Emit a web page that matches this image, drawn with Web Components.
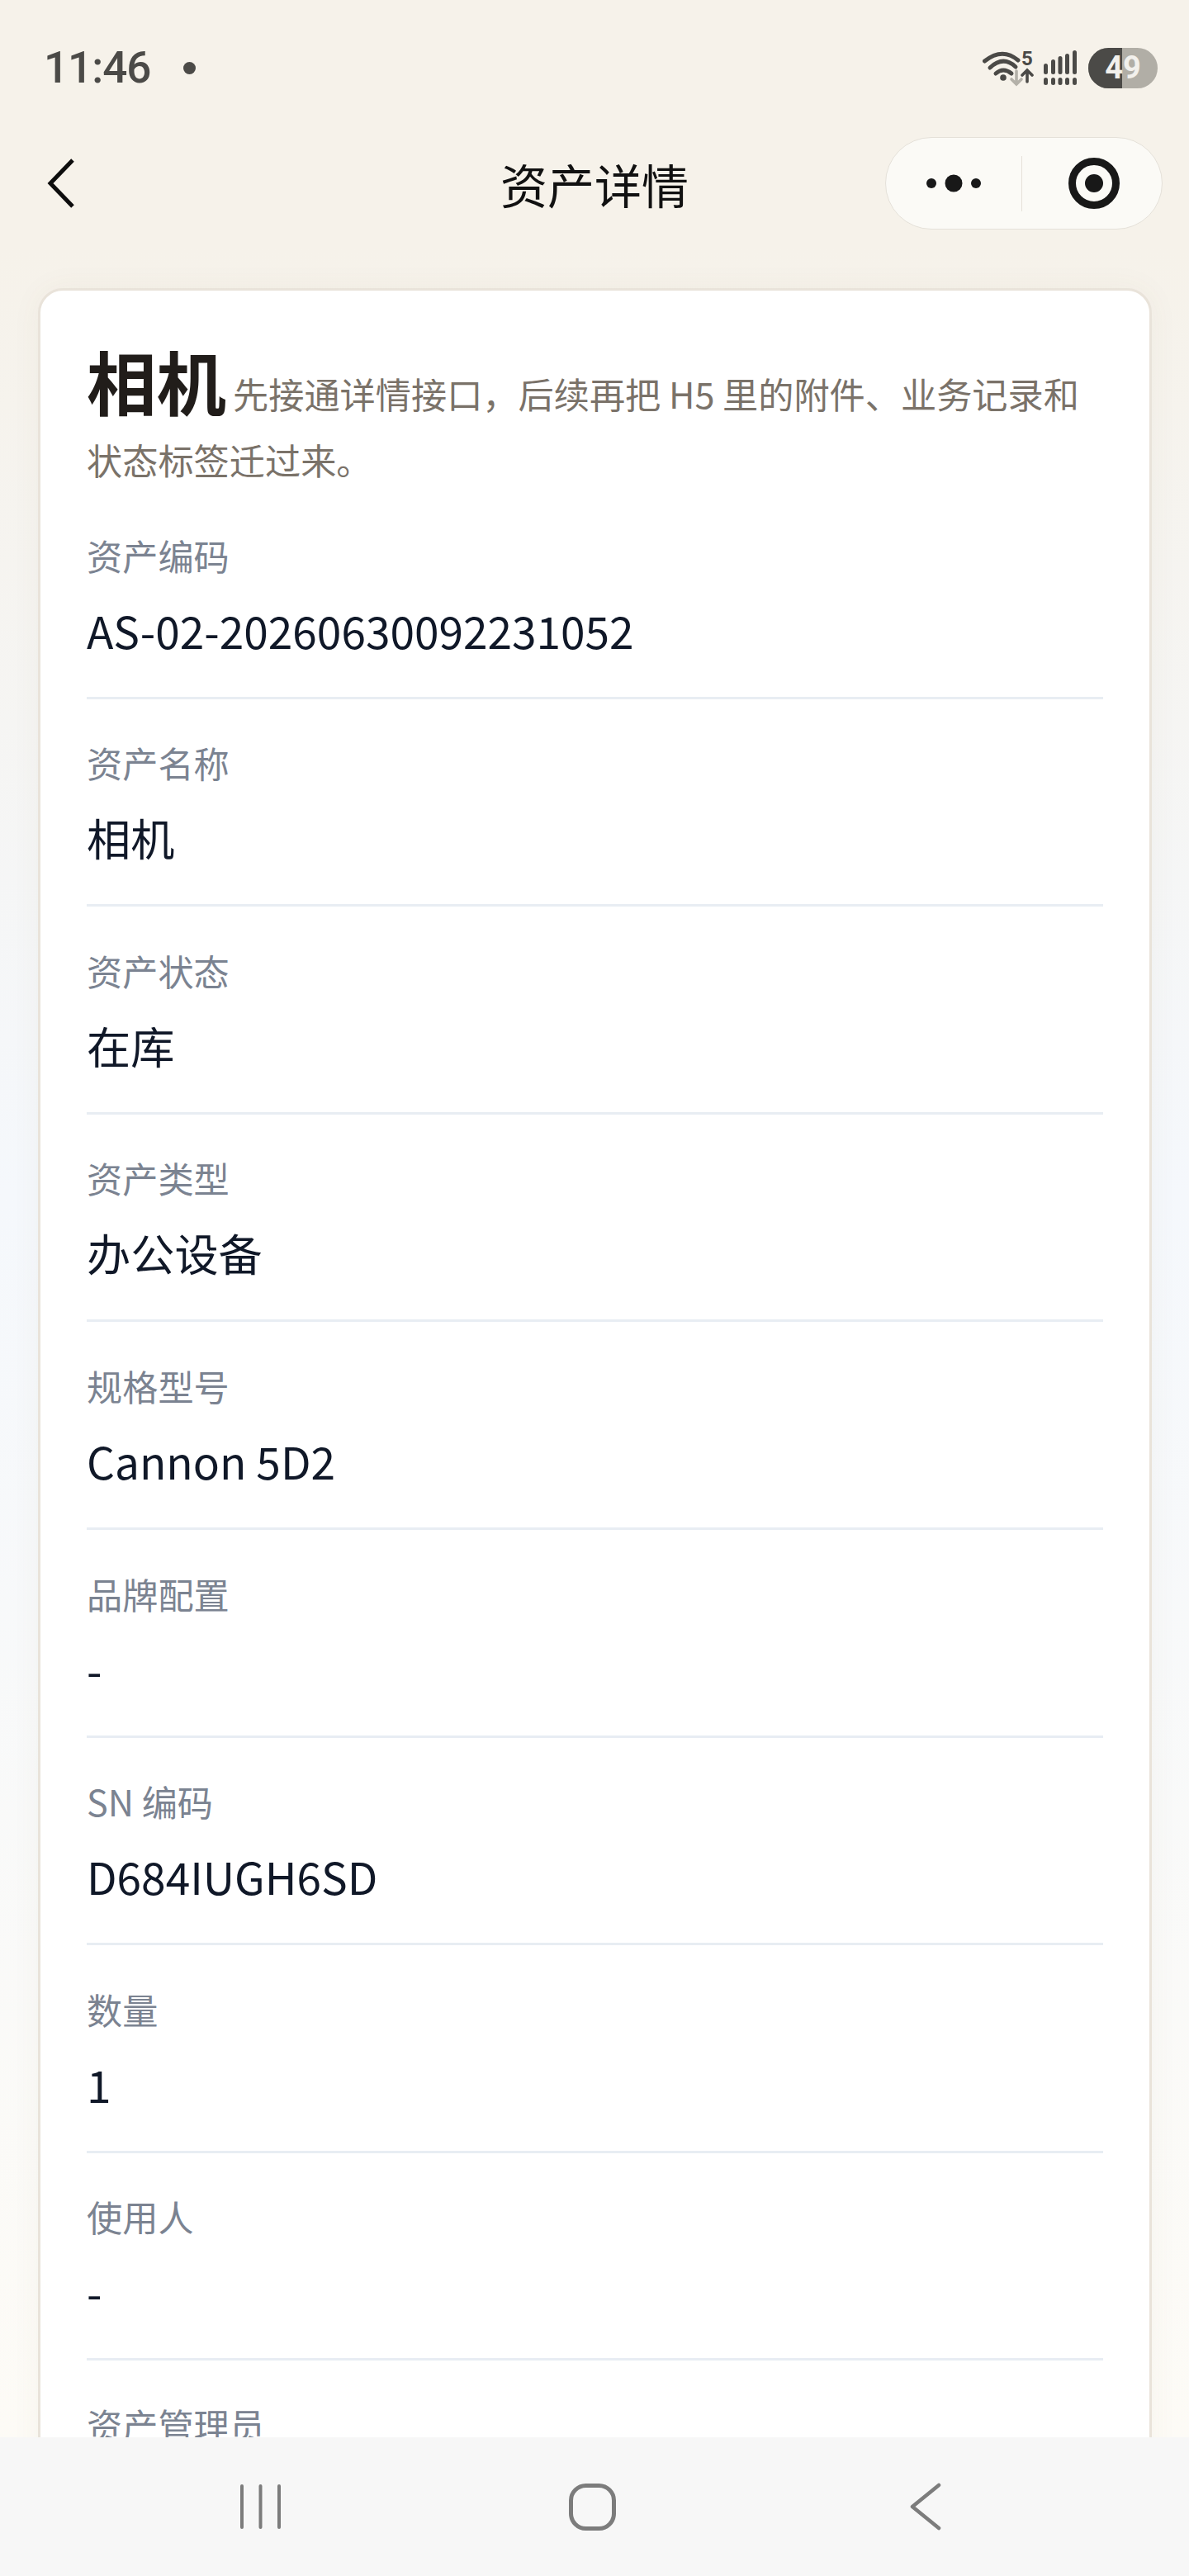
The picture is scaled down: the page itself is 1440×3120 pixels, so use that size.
<!DOCTYPE html>
<html>
<head>
<meta charset="utf-8">
<title>资产详情</title>
<style>
html,body{margin:0;padding:0;height:3120px;overflow:hidden}
body{font-family:"Noto Sans CJK SC","Noto Sans",sans-serif;background:#f6f2ea}
</style>
</head>
<body>
<app-page>
  <status-bar slot="top"></status-bar>
  <nav-bar slot="top">资产详情</nav-bar>
  <detail-card>
    <span slot="title">相机</span>
    <span slot="desc">先接通详情接口，后续再把 H5 里的附件、业务记录和状态标签迁过来。</span>
    <detail-row label="资产编码" value="AS-02-20260630092231052"></detail-row>
    <detail-row label="资产名称" value="相机"></detail-row>
    <detail-row label="资产状态" value="在库"></detail-row>
    <detail-row label="资产类型" value="办公设备"></detail-row>
    <detail-row label="规格型号" value="Cannon 5D2"></detail-row>
    <detail-row label="品牌配置" value="-"></detail-row>
    <detail-row label="SN 编码" value="D684IUGH6SD"></detail-row>
    <detail-row label="数量" value="1"></detail-row>
    <detail-row label="使用人" value="-"></detail-row>
    <detail-row label="资产管理员" value="-"></detail-row>
  </detail-card>
  <sys-nav slot="bottom"></sys-nav>
</app-page>
<script>
class AppPage extends HTMLElement {
  constructor(){ super()
    this.attachShadow({mode:'open'}).innerHTML = `
<style>
:host{display:flex;flex-direction:column;height:3120px;background:linear-gradient(180deg,#f6f2ea 0,#f6f2ea 300px,#f5f8fc 1450px,#fdfbf6 2950px)}
#main{flex:1;min-height:0;overflow:hidden;padding:55px 45px 0 46px}
</style>
<slot name="top"></slot>
<div id="main"><slot></slot></div>
<slot name="bottom"></slot>`
  }
}
class StatusBar extends HTMLElement {
  constructor(){ super()
    this.attachShadow({mode:'open'}).innerHTML = `
<style>
:host{display:flex;align-items:center;justify-content:space-between;height:150px;padding:14px 38px 0 53px;box-sizing:border-box;color:#4b4a47}
#l{display:flex;align-items:center;gap:40px;font:500 53px/1 Roboto,sans-serif;letter-spacing:-1px}
#dot{width:15px;height:15px;border-radius:50%;background:#4b4a47}
#r{display:flex;align-items:center}
svg{display:block}
#batt{position:relative;width:84px;height:49px;border-radius:25px;overflow:hidden;background:#b1aea6;margin-left:14px;display:flex;align-items:center;justify-content:center;font:700 38px/1 Roboto,sans-serif;color:#f2f0ec}
#batt i{position:absolute;left:0;top:0;bottom:0;width:41px;background:#4b4a47}
#batt span{position:relative}
</style>
<div id="l"><span>11:46</span><div id="dot"></div></div>
<div id="r">
  <svg width="62" height="63" viewBox="0 -10 62 63" fill="none" stroke="#4b4a47" stroke-linecap="round">
    <path d="M2.5 13 Q24 -4 43 12" stroke-width="5"/>
    <path d="M9 21 Q25 6 40 20" stroke-width="5"/>
    <path d="M16 28 Q25 20 35 28" stroke-width="5"/>
    <circle cx="25" cy="33" r="3.8" fill="#4b4a47" stroke="none"/>
    <path d="M41 25V41M35 35l6 6 6-6" stroke="#b4b1a9" stroke-width="3.6"/>
    <path d="M54 38V24M48 30l6-6 6 6" stroke-width="3.6"/>
    <text x="54" y="18" text-anchor="middle" font-family="Roboto,sans-serif" font-weight="700" font-size="24" fill="#4b4a47" stroke="none">5</text>
  </svg>
  <svg width="40" height="42" viewBox="0 0 40 42" fill="#4b4a47" style="margin-left:12px">
    <rect x="0" y="16" width="5" height="13" rx="2.5"/><rect x="9" y="11" width="5" height="18" rx="2.5"/><rect x="17.5" y="7" width="5" height="22" rx="2.5"/><rect x="26" y="4" width="5" height="25" rx="2.5"/><rect x="35" y="0" width="5" height="29" rx="2.5"/>
    <rect x="0" y="33" width="5" height="9" rx="2.5"/><rect x="9" y="33" width="5" height="9" rx="2.5"/><rect x="17.5" y="33" width="5" height="9" rx="2.5"/><rect x="26" y="33" width="5" height="9" rx="2.5"/><rect x="35" y="33" width="5" height="9" rx="2.5"/>
  </svg>
  <div id="batt"><i></i><span>49</span></div>
</div>`
  }
}
class NavBar extends HTMLElement {
  constructor(){ super()
    this.attachShadow({mode:'open'}).innerHTML = `
<style>
:host{display:flex;align-items:center;justify-content:space-between;position:relative;height:144px;padding:0 32px 0 56px;box-sizing:border-box}
#t{position:absolute;left:0;right:0;top:32px;text-align:center;font-size:57px;line-height:80px;color:#111}
#cap{display:flex;align-items:center;width:336px;height:112px;box-sizing:border-box;border:1.5px solid #e5e1d9;border-radius:56px;background:#fbfaf6}
#cap div{flex:1;display:flex;align-items:center;justify-content:center;height:100%}
#cap i{width:1.5px;height:67px;background:#e5e1d9}
svg{display:block}
</style>
<svg width="34" height="60" viewBox="0 0 34 60" fill="none" stroke="#0d0d0d" stroke-width="5"><path d="M32 2 L5 30 L32 58"/></svg>
<div id="t"><slot></slot></div>
<div id="cap">
  <div><svg width="66" height="22" viewBox="0 0 66 22" fill="#181818"><circle cx="6" cy="11" r="6"/><circle cx="33" cy="11" r="10.5"/><circle cx="60" cy="11" r="6"/></svg></div>
  <i></i>
  <div style="padding-left:5px"><svg width="62" height="62" viewBox="0 0 62 62"><circle cx="31" cy="31" r="26.5" fill="none" stroke="#181818" stroke-width="9"/><circle cx="31" cy="31" r="11" fill="#181818"/></svg></div>
</div>`
  }
}
class DetailCard extends HTMLElement {
  constructor(){ super()
    this.attachShadow({mode:'open'}).innerHTML = `
<style>
:host{display:block;background:#fff;border:3px solid #e9e3da;border-radius:30px;padding:54px 56px 0;box-sizing:border-box;box-shadow:0 0 36px rgba(110,90,50,.05)}
#head{height:189px}
#title{font-size:84.5px;font-weight:700;color:#211d1a;line-height:108px;margin-right:8px;vertical-align:-2px}
#desc{font-size:43.2px;color:#7a7269;line-height:80px}
</style>
<div id="head"><span id="title"><slot name="title"></slot></span><span id="desc"><slot name="desc"></slot></span></div>
<slot></slot>`
  }
}
class DetailRow extends HTMLElement {
  constructor(){ super()
    this.attachShadow({mode:'open'}).innerHTML = `
<style>
:host{display:block;height:251.6px;box-sizing:border-box;padding-top:46.6px;border-bottom:3px solid #e8edf3}
#l{font-size:43.2px;line-height:60px;color:#7b8391}
#v{font-size:53.2px;line-height:78px;margin-top:22px;color:#101828}
</style>
<div id="l"></div><div id="v"></div>`
    this.shadowRoot.querySelector('#l').textContent = this.getAttribute('label')
    this.shadowRoot.querySelector('#v').textContent = this.getAttribute('value')
  }
}
class SysNav extends HTMLElement {
  constructor(){ super()
    this.attachShadow({mode:'open'}).innerHTML = `
<style>
:host{display:flex;align-items:center;height:168px;padding:0 0 0 290px;box-sizing:border-box;background:#f7f7f7;flex:none}
svg{display:block}
</style>
<svg width="51" height="54" viewBox="0 0 51 54" stroke="#7c7c7c" stroke-width="4" fill="none" stroke-linecap="round"><path d="M3 2V52M25.5 2V52M48 2V52"/></svg>
<svg width="57" height="57" viewBox="0 0 57 57" fill="none" stroke="#7c7c7c" stroke-width="5" style="margin-left:348px"><rect x="2.5" y="2.5" width="52" height="52" rx="18"/></svg>
<svg width="38" height="58" viewBox="0 0 38 58" fill="none" stroke="#7c7c7c" stroke-width="4.5" stroke-linecap="round" stroke-linejoin="round" style="margin-left:356px"><path d="M35 3 L3 29 L35 55"/></svg>`
  }
}
customElements.define('app-page',AppPage)
customElements.define('status-bar',StatusBar)
customElements.define('nav-bar',NavBar)
customElements.define('detail-card',DetailCard)
customElements.define('detail-row',DetailRow)
customElements.define('sys-nav',SysNav)
</script>
</body>
</html>
